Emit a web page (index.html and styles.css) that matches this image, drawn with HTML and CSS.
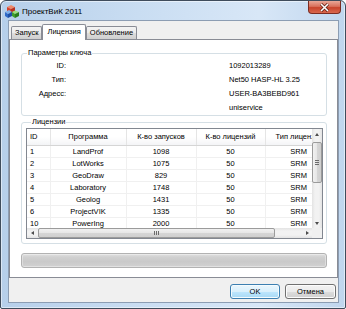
FILE: index.html
```html
<!DOCTYPE html>
<html lang="ru">
<head>
    <meta charset="UTF-8">
    <title>ПроектВиК 2011</title>
    <link rel="stylesheet" href="styles.css">
</head>
<body>
    <div class="window">
        <div class="titlebar">
            <svg class="app-icon" width="14" height="14" viewBox="0 0 14 14">
                <polygon points="2,3 6,1 10,3 6,5" fill="#f08a6a"/>
                <polygon points="2,3 6,5 6,9 2,7" fill="#d8402a"/>
                <polygon points="6,5 10,3 10,7 6,9" fill="#b8301e"/>
                <polygon points="0,8 4,6 7,8 3,10" fill="#7fb0ea"/>
                <polygon points="0,8 3,10 3,14 0,12" fill="#2f6ac8"/>
                <polygon points="3,10 7,8 7,12 3,14" fill="#1d4fa6"/>
                <polygon points="7,8 10,6.5 14,8 10,10" fill="#9ee07a"/>
                <polygon points="7,8 10,10 10,14 7,12" fill="#3f9e2a"/>
                <polygon points="10,10 14,8 14,12 10,14" fill="#2a7d1c"/>
            </svg>
            <span class="title">ПроектВиК 2011</span>
            <div class="close-btn">
                <svg width="11" height="9" viewBox="0 0 11 9">
                    <path d="M2 1 L9 8 M9 1 L2 8" stroke="#5a1a10" stroke-width="3"/>
                    <path d="M2 1 L9 8 M9 1 L2 8" stroke="#ffffff" stroke-width="1.6"/>
                </svg>
            </div>
        </div>
        <div class="client">
            <div class="tabs">
                <div class="tab">Запуск</div>
                <div class="tab active">Лицензия</div>
                <div class="tab">Обновление</div>
            </div>
            <div class="tab-page">
                <fieldset class="group key-group">
                    <legend>Параметры ключа</legend>
                    <div class="key-grid">
                        <span class="key-label">ID:</span><span>1092013289</span>
                        <span class="key-label">Тип:</span><span>Net50 HASP-HL 3.25</span>
                        <span class="key-label">Адресс:</span><span>USER-BA3BEBD961</span>
                        <span class="key-label"></span><span>uniservice</span>
                    </div>
                </fieldset>
                <fieldset class="group lic-group">
                    <legend>Лицензии</legend>
                    <div class="listview">
                        <div class="lv-content">
                            <table class="lv-table">
                                <thead>
                                    <tr>
                                        <th class="c-id">ID</th>
                                        <th class="c-name">Программа</th>
                                        <th class="c-runs">К-во запусков</th>
                                        <th class="c-lic">К-во лицензий</th>
                                        <th class="c-type">Тип лицензии</th>
                                    </tr>
                                </thead>
                                <tbody>
                                    <tr><td class="c-id">1</td><td class="c-name">LandProf</td><td class="c-runs">1098</td><td class="c-lic">50</td><td class="c-type">SRM</td></tr>
                                    <tr><td class="c-id">2</td><td class="c-name">LotWorks</td><td class="c-runs">1075</td><td class="c-lic">50</td><td class="c-type">SRM</td></tr>
                                    <tr><td class="c-id">3</td><td class="c-name">GeoDraw</td><td class="c-runs">829</td><td class="c-lic">50</td><td class="c-type">SRM</td></tr>
                                    <tr><td class="c-id">4</td><td class="c-name">Laboratory</td><td class="c-runs">1748</td><td class="c-lic">50</td><td class="c-type">SRM</td></tr>
                                    <tr><td class="c-id">5</td><td class="c-name">Geolog</td><td class="c-runs">1431</td><td class="c-lic">50</td><td class="c-type">SRM</td></tr>
                                    <tr><td class="c-id">6</td><td class="c-name">ProjectVIK</td><td class="c-runs">1335</td><td class="c-lic">50</td><td class="c-type">SRM</td></tr>
                                    <tr><td class="c-id">10</td><td class="c-name">PowerIng</td><td class="c-runs">2000</td><td class="c-lic">50</td><td class="c-type">SRM</td></tr>
                                </tbody>
                            </table>
                        </div>
                        <div class="vscroll">
                            <div class="sb-arrow"><span class="tri tri-up"></span></div>
                            <div class="sb-track">
                                <div class="sb-thumb v-thumb"><span class="grip-v"></span></div>
                            </div>
                            <div class="sb-arrow"><span class="tri tri-down"></span></div>
                        </div>
                        <div class="hscroll">
                            <div class="sb-arrow"><span class="tri tri-left"></span></div>
                            <div class="sb-track h-track">
                                <div class="sb-thumb h-thumb"><span class="grip-h"></span></div>
                            </div>
                            <div class="sb-arrow"><span class="tri tri-right"></span></div>
                        </div>
                        <div class="sb-corner"></div>
                    </div>
                </fieldset>
                <div class="progress"></div>
            </div>
            <div class="buttons">
                <button class="btn btn-default">OK</button>
                <button class="btn">Отмена</button>
            </div>
        </div>
    </div>
</body>
</html>
```

FILE: styles.css
```css
body {
    margin: 0;
    background: #ffffff;
    font-family: "Liberation Sans", Arial, sans-serif;
    font-size: 7.5px;
    color: #000;
}

.window {
    width: 346px;
    height: 309px;
    box-sizing: border-box;
    border: 1px solid #3f4c5c;
    border-radius: 6px 6px 2px 2px;
    background: linear-gradient(to right, #b6cfea 0%, #c9ddf2 40%, #d8e7f7 75%, #c0d6ee 100%);
    padding: 0 6px 5px 7px;
    display: flex;
    flex-direction: column;
    box-shadow: inset 0 0 0 1px rgba(255, 255, 255, 0.5);
}

/* Title bar */
.titlebar {
    height: 19px;
    display: flex;
    align-items: center;
    flex-shrink: 0;
}

.app-icon {
    margin-left: -3px;
    margin-right: 3px;
    margin-top: 1px;
}

.title {
    font-size: 8px;
    color: #000;
    margin-top: 1px;
}

.close-btn {
    margin-left: auto;
    margin-right: -2px;
    align-self: flex-start;
    width: 33px;
    height: 13px;
    box-sizing: border-box;
    border: 1px solid #7b2c22;
    border-top: none;
    border-radius: 0 0 4px 4px;
    background: linear-gradient(#e9a898 0%, #d9715c 45%, #c8442c 55%, #d9684e 100%);
    display: flex;
    align-items: center;
    justify-content: center;
}

/* Client area */
.client {
    flex: 1;
    background: #f0f0f0;
    border: 1px solid #8c9db3;
    display: flex;
    flex-direction: column;
}

.tabs {
    display: flex;
    align-items: flex-end;
    height: 18px;
    padding-left: 2px;
    position: relative;
    z-index: 1;
}

.tab {
    height: 12px;
    line-height: 12px;
    padding: 0 3px;
    border: 1px solid #898c95;
    border-bottom: none;
    border-radius: 2px 2px 0 0;
    background: linear-gradient(#f3f3f3 0%, #ebebeb 50%, #dddddd 51%, #cfcfcf 100%);
    margin-right: -1px;
}

.tab.active {
    height: 15px;
    line-height: 13px;
    padding: 0 4px;
    background: #ffffff;
    margin-bottom: -1px;
    margin-left: 1px;
    margin-right: 0;
    position: relative;
}

.tab-page {
    background: #ffffff;
    border: 1px solid #898c95;
    padding: 8px 10px 0 11px;
    box-sizing: border-box;
    height: 239px;
}

/* Group boxes */
.group {
    margin: 0;
    border: 1px solid #d5dfe5;
    border-radius: 3px;
    box-shadow: inset 0 0 0 1px #ffffff;
    padding: 0;
}

.group legend {
    padding: 0 1px;
    margin-left: 5px;
    line-height: 10px;
    color: #000;
}

.key-group {
    padding-bottom: 1px;
}

.key-grid {
    display: grid;
    grid-template-columns: 44px 1fr;
    column-gap: 163px;
    grid-auto-rows: 14px;
    align-items: center;
}

.key-label {
    text-align: right;
}

.lic-group {
    margin-top: 1px;
    padding: 1px 3px 4px 4px;
}

/* List view */
.listview {
    height: 111px;
    box-sizing: border-box;
    border: 1px solid #828790;
    display: grid;
    grid-template-columns: 1fr 10px;
    grid-template-rows: 1fr 10px;
    background: #ffffff;
}

.lv-content {
    overflow: hidden;
}

.lv-table {
    border-collapse: collapse;
    table-layout: fixed;
    width: 285px;
}

.lv-table th,
.lv-table td {
    box-sizing: border-box;
    padding: 0;
    white-space: nowrap;
    overflow: hidden;
    text-align: center;
}

.lv-table th {
    height: 16px;
    font-weight: normal;
    background: linear-gradient(#ffffff 0%, #ffffff 50%, #f3f4f6 100%);
    border-right: 1px solid #e5e5e5;
    border-bottom: 1px solid #d5d5d5;
}

.lv-table td {
    height: 12px;
    line-height: 11px;
    border-right: 1px solid #f0f0f0;
    border-bottom: 1px solid #f0f0f0;
}

.lv-table .c-id { width: 23px; text-align: left; padding-left: 3px; }
.lv-table .c-name { width: 76px; }
.lv-table .c-runs { width: 70px; }
.lv-table .c-lic { width: 69px; }
.lv-table .c-type { width: 47px; }

.lv-table td.c-type {
    text-align: right;
    padding-right: 5px;
    border-right: none;
}

.lv-table th.c-type {
    text-align: left;
    padding-left: 10px;
    border-right: none;
}

/* Scroll bars */
.vscroll, .hscroll {
    display: flex;
}

.vscroll {
    flex-direction: column;
    background: linear-gradient(to right, #e3e3e3, #f2f2f2 30%, #f2f2f2 70%, #e3e3e3);
}

.hscroll {
    background: linear-gradient(#e3e3e3, #f2f2f2 30%, #f2f2f2 70%, #e3e3e3);
}

.sb-arrow {
    width: 10px;
    height: 10px;
    flex-shrink: 0;
    display: flex;
    align-items: center;
    justify-content: center;
}

.sb-track {
    flex: 1;
    display: flex;
    flex-direction: column;
}

.h-track {
    flex-direction: row;
}

.sb-thumb {
    box-sizing: border-box;
    border: 1px solid #9b9b9b;
    border-radius: 2px;
    display: flex;
    align-items: center;
    justify-content: center;
}

.v-thumb {
    margin-top: 3px;
    height: 41px;
    background: linear-gradient(to right, #f1f1f1, #e6e6e6 50%, #d6d6d6 51%, #cfcfcf);
}

.h-thumb {
    margin-left: 1px;
    width: 237px;
    background: linear-gradient(#f1f1f1, #e6e6e6 50%, #d6d6d6 51%, #cfcfcf);
}

.grip-v {
    width: 4px;
    height: 3px;
    border-top: 1px solid #6b6b6b;
    border-bottom: 1px solid #6b6b6b;
    background: linear-gradient(transparent 1px, #6b6b6b 1px, #6b6b6b 2px, transparent 2px);
}

.grip-h {
    width: 3px;
    height: 4px;
    border-left: 1px solid #6b6b6b;
    border-right: 1px solid #6b6b6b;
    background: linear-gradient(to right, transparent 1px, #6b6b6b 1px, #6b6b6b 2px, transparent 2px);
}

.tri {
    width: 0;
    height: 0;
    border: 2px solid transparent;
}

.tri-up { border-bottom: 3px solid #4d4d4d; border-top: none; }
.tri-down { border-top: 3px solid #4d4d4d; border-bottom: none; }
.tri-left { border-right: 3px solid #4d4d4d; border-left: none; }
.tri-right { border-left: 3px solid #4d4d4d; border-right: none; }

.sb-corner {
    background: #f0f0f0;
}

/* Progress bar */
.progress {
    margin-top: 9px;
    height: 15px;
    box-sizing: border-box;
    border: 1px solid #b2b2b2;
    border-radius: 3px;
    background: linear-gradient(#e0e0e0 0%, #d0d0d0 25%, #c9c9c9 60%, #d2d2d2 100%);
    box-shadow: inset 0 0 0 1px rgba(255, 255, 255, 0.35);
}

/* Dialog buttons */
.buttons {
    display: flex;
    justify-content: flex-end;
    gap: 5px;
    padding: 6px 2px 0 0;
}

.btn {
    font-family: inherit;
    font-size: 7.5px;
    width: 50px;
    height: 15px;
    padding: 0;
    border: 1px solid #707070;
    border-radius: 3px;
    background: linear-gradient(#f2f2f2 0%, #ebebeb 50%, #dddddd 51%, #cfcfcf 100%);
    box-shadow: inset 0 0 0 1px #fcfcfc;
    color: #000;
}

.btn + .btn {
    width: 51px;
}

.btn-default {
    border-color: #3c7fb1;
    background: linear-gradient(#eaf6fd 0%, #d9f0fc 50%, #bee6fd 51%, #a7d9f5 100%);
    box-shadow: inset 0 0 0 1px #f4fbfe;
}
```
